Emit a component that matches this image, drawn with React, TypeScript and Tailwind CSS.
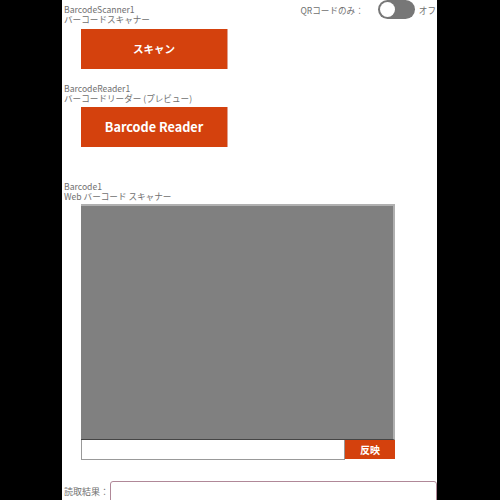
import React from "react";

const font = { fontFamily: '"Noto Sans CJK JP", "Noto Sans", sans-serif' };

export default function App() {
  return (
    <div className="w-[500px] h-[500px] bg-black flex overflow-hidden" style={font}>
      <div className="ml-[62px] w-[375px] h-[500px] shrink-0 bg-white relative flex flex-col text-[#707070] text-[8.6px] leading-[10px]">
        <div className="absolute right-[1px] top-0 flex items-center h-[19px]">
          <span className="mr-[14px] whitespace-nowrap">QRコードのみ：</span>
          <div className="w-[37px] h-[19px] rounded-full bg-[#777] relative shrink-0">
            <div className="absolute left-[2px] top-[2px] w-[15px] h-[15px] rounded-full bg-white" />
          </div>
          <span className="ml-[4px]">オフ</span>
        </div>

        <div className="pl-[2px] pt-[4px] shrink-0">
          <div>BarcodeScanner1</div>
          <div>バーコードスキャナー</div>
        </div>
        <div className="shrink-0 ml-[19px] mt-[5px] w-[147px] h-[40px] bg-[#d4410d] border-r border-[#e0a090] flex items-center justify-center text-white font-bold text-[10.5px]">
          スキャン
        </div>

        <div className="pl-[2px] mt-[14px] shrink-0">
          <div>BarcodeReader1</div>
          <div>バーコードリーダー (プレビュー)</div>
        </div>
        <div className="shrink-0 ml-[19px] mt-[4px] w-[147px] h-[40px] bg-[#d4410d] border-r border-[#e0a090] flex items-center justify-center text-white font-bold text-[12.7px]">
          Barcode Reader
        </div>

        <div className="pl-[2px] mt-[34px] shrink-0">
          <div>Barcode1</div>
          <div>Web バーコード スキャナー</div>
        </div>
        <div className="shrink-0 ml-[19px] mt-[3px] w-[314px] flex flex-col">
          <div className="h-[236px] shrink-0 bg-[#808080] border-t-2 border-r-2 border-[#b0b0b0] border-b border-b-[#444]" />
          <div className="flex h-[20px] shrink-0">
            <div className="flex-1 bg-white border border-t-0 border-[#999]" />
            <div className="w-[50px] h-[19px] bg-[#d4410d] flex items-center justify-center text-white font-bold text-[10px]">
              反映
            </div>
          </div>
        </div>

        <div className="flex items-start mt-[21px] shrink-0">
          <span className="pl-[2px] pt-[6px] w-[48px] whitespace-nowrap text-[9px]">読取結果：</span>
          <div className="flex-1 h-[30px] border border-[#b08898] rounded-[3px]" />
        </div>
      </div>
    </div>
  );
}
